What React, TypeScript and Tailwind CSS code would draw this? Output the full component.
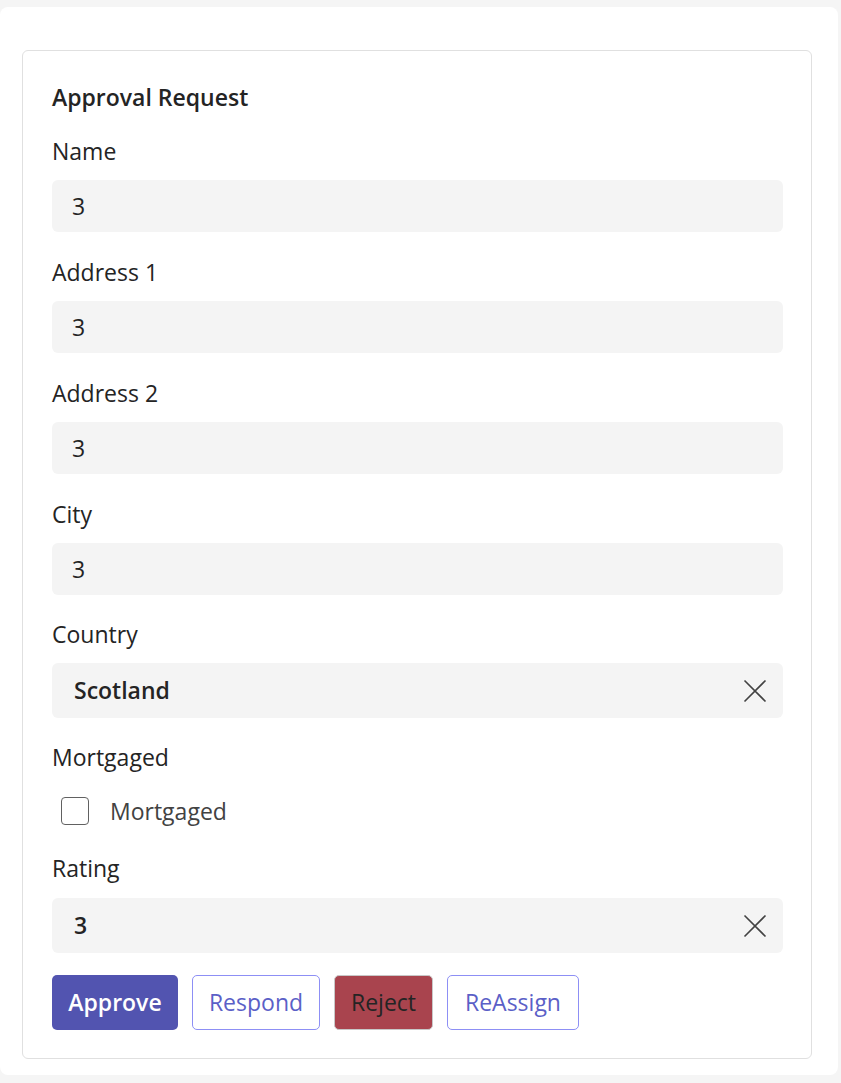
import React from "react";

const font = { fontFamily: '"Open Sans", "Noto Sans", sans-serif' };

function XIcon() {
  return (
    <svg width="24" height="24" viewBox="0 0 24 24" className="text-[#424242]">
      <path d="M1.5 1.5 L22.5 22.5 M22.5 1.5 L1.5 22.5" stroke="currentColor" strokeWidth="1.6" fill="none" />
    </svg>
  );
}

function Label({ children }: { children: React.ReactNode }) {
  return <div className="h-[28px] leading-[28px] text-[23px] text-[#242424]">{children}</div>;
}

function TextField({ label, value }: { label: string; value: string }) {
  return (
    <div className="flex flex-col">
      <Label>{label}</Label>
      <div className="mt-[15px] h-[52px] rounded-[6px] bg-[#f4f4f4] flex items-center pl-[20px] text-[23px] text-[#242424]">
        {value}
      </div>
    </div>
  );
}

function SelectField({ label, value, mt }: { label: string; value: string; mt: string }) {
  return (
    <div className="flex flex-col">
      <Label>{label}</Label>
      <div className={`${mt} h-[55px] rounded-[6px] bg-[#f4f4f4] flex items-center justify-between pl-[22px] pr-[16px] text-[23px] font-semibold text-[#242424]`}>
        <span>{value}</span>
        <XIcon />
      </div>
    </div>
  );
}

export default function App() {
  return (
    <div className="min-h-[1083px] bg-[#f5f5f5] pt-[7px] pb-[8px]" style={font}>
      <div className="w-[838px] h-[1068px] bg-white rounded-[8px] pl-[22px] pr-[26px] pt-[43px]">
        <div className="h-[1009px] border border-[#e0e0e0] rounded-[6px] pl-[29px] pr-[28px] pt-[32px]">
          <div className="h-[28px] leading-[28px] text-[23px] font-semibold text-[#242424]">Approval Request</div>
          <div className="mt-[26px] flex flex-col gap-[26px]">
            <TextField label="Name" value="3" />
            <TextField label="Address 1" value="3" />
            <TextField label="Address 2" value="3" />
            <TextField label="City" value="3" />
          </div>
          <div className="mt-[25px]">
            <SelectField label="Country" value="Scotland" mt="mt-[15px]" />
          </div>
          <div className="mt-[25px]">
            <Label>Mortgaged</Label>
            <div className="mt-[24px] h-[32px] flex items-center pl-[9px]">
              <div className="w-[28px] h-[28px] rounded-[4px] border border-[#616161] bg-white" />
              <span className="ml-[21px] text-[23px] text-[#424242]">Mortgaged</span>
            </div>
          </div>
          <div className="mt-[27px]">
            <SelectField label="Rating" value="3" mt="mt-[16px]" />
          </div>
          <div className="mt-[22px] flex gap-[14px]">
            <button className="h-[55px] w-[126px] flex items-center justify-center rounded-[5px] bg-[#5254b0] text-white text-[23px] font-semibold">Approve</button>
            <button className="h-[55px] w-[128px] flex items-center justify-center rounded-[5px] border border-[#8d8ff5] bg-white text-[#5b5fc7] text-[23px]">Respond</button>
            <button className="h-[55px] w-[99px] flex items-center justify-center rounded-[5px] border border-[#c8c8c8] bg-[#a9444e] text-[#242424] text-[23px]">Reject</button>
            <button className="h-[55px] w-[132px] flex items-center justify-center rounded-[5px] border border-[#8d8ff5] bg-white text-[#5b5fc7] text-[23px]">ReAssign</button>
          </div>
        </div>
      </div>
    </div>
  );
}
